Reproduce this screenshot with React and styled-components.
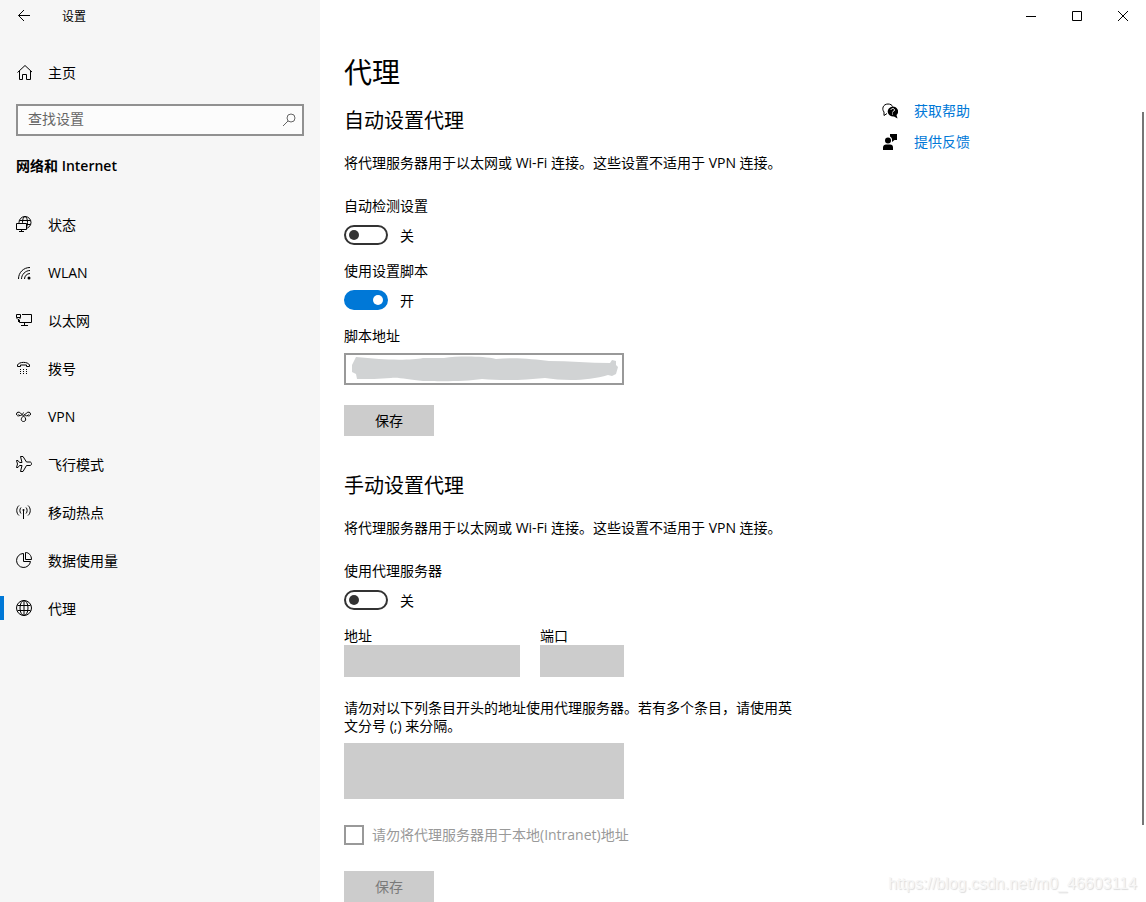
import React, { useState } from "react";
import styled, { createGlobalStyle } from "styled-components";

const GlobalStyle = createGlobalStyle`
  * {
    box-sizing: border-box;
  }

  body {
    margin: 0;
    background: #ffffff;
    color: #000000;
    font-family: "Open Sans", "Noto Sans CJK SC", sans-serif;
    font-size: 14px;
    line-height: 20px;
  }

  button,
  input,
  textarea {
    font: inherit;
    color: inherit;
    border-radius: 0;
  }

  h1, h2, p {
    margin: 0;
    font-weight: 400;
  }
`;

const Window = styled.div`
  position: relative;
  display: flex;
  min-height: 100vh;
`;

const Sidebar = styled.aside`
  flex: 0 0 320px;
  background: #f6f6f6;
`;

const AppBar = styled.div`
  display: flex;
  align-items: center;
  height: 32px;
`;

const BackButton = styled.button`
  display: flex;
  align-items: center;
  justify-content: center;
  width: 48px;
  height: 32px;
  padding: 0;
  border: 0;
  background: transparent;
`;

const AppName = styled.span`
  padding: 2px 0 0 14px;
  font-size: 12px;
`;

const Icon = styled.svg`
  display: block;
  flex: none;
  width: 16px;
  height: 16px;
  fill: none;
  stroke: currentColor;
  stroke-width: 1;
`;

const NavLink = styled.a`
  display: flex;
  align-items: center;
  gap: 16px;
  height: 48px;
  padding-left: 16px;
  color: #000000;
  text-decoration: none;

  &::before {
    content: "";
    display: ${(props) => (props.$active ? "block" : "none")};
    width: 4px;
    height: 24px;
    margin-left: -16px;
    margin-right: -4px;
    background: #0078d7;
  }
`;

const RowText = styled.span`
  padding-top: 2px;
`;

const HomeRow = styled.div`
  padding-top: 16px;
`;

const SearchBox = styled.label`
  display: flex;
  align-items: center;
  height: 32px;
  margin: 8px 16px 0;
  padding: 0 5px 0 10px;
  border: 2px solid #919191;
  background: #fcfcfc;
  color: #666666;
`;

const SearchInput = styled.input`
  flex: 1;
  min-width: 0;
  padding: 0 0 2px;
  border: 0;
  outline: 0;
  background: transparent;

  &::placeholder {
    color: #666666;
    opacity: 1;
  }
`;

const SectionTitle = styled.h2`
  margin: 20px 16px 24px;
  font-size: 14px;
  font-weight: 600;
`;

const Main = styled.main`
  flex: 1;
  min-width: 0;
`;

const WindowButtons = styled.div`
  display: flex;
  justify-content: flex-end;
  height: 32px;
`;

const WindowButton = styled.button`
  display: flex;
  align-items: center;
  justify-content: center;
  width: 46px;
  padding: 0;
  border: 0;
  background: transparent;
`;

const Columns = styled.div`
  display: flex;
  gap: 90px;
  padding: 22px 24px 0;
`;

const Settings = styled.div`
  flex: 0 1 448px;
`;

const PageTitle = styled.h1`
  font-size: 28px;
  line-height: 36px;
  padding-bottom: 17px;
`;

const Section = styled.section`
  & + & {
    margin-top: 36px;
  }
`;

const Heading = styled.h2`
  font-size: 20px;
  line-height: 28px;
`;

const Description = styled.p`
  padding: 18px 0 23px;
`;

const ToggleGroup = styled.div`
  padding-bottom: 16px;
`;

const ToggleLabel = styled.label`
  display: block;
`;

const ToggleRow = styled.div`
  display: flex;
  align-items: center;
  gap: 12px;
  height: 20px;
  margin-top: 9px;
`;

const Switch = styled.input`
  appearance: none;
  display: flex;
  align-items: center;
  justify-content: ${(props) => (props.checked ? "flex-end" : "flex-start")};
  width: 44px;
  height: 20px;
  margin: 0;
  padding: 0 3px;
  border: 2px solid ${(props) => (props.checked ? "#0078d7" : "#333333")};
  border-radius: 10px;
  background: ${(props) => (props.checked ? "#0078d7" : "#ffffff")};

  &::before {
    content: "";
    width: 10px;
    height: 10px;
    border-radius: 50%;
    background: ${(props) => (props.checked ? "#ffffff" : "#333333")};
  }
`;

const FieldLabel = styled.label`
  display: block;
  line-height: 18px;
`;

const ScriptField = styled.div`
  display: grid;
  width: 280px;
  margin: 8px 0 20px;

  & > * {
    grid-area: 1 / 1;
  }
`;

const ScriptInput = styled.input`
  width: 100%;
  height: 32px;
  padding: 0 10px;
  border: 2px solid #999999;
  background: #ffffff;
`;

const Scribble = styled.svg`
  width: 280px;
  height: 32px;
  fill: #d1d3d4;
  pointer-events: none;
`;

const SaveButton = styled.button`
  display: block;
  width: 90px;
  height: 31px;
  padding: 0;
  border: 0;
  background: #cccccc;

  &:disabled {
    color: #7a7a7a;
  }
`;

const FieldRow = styled.div`
  display: grid;
  grid-template-columns: 176px 84px;
  gap: 20px;
  padding-top: 1px;
`;

const DisabledInput = styled.input`
  display: block;
  width: 100%;
  height: 32px;
  border: 0;
  background: #cccccc;
`;

const ExceptionLabel = styled(FieldLabel)`
  padding: 22px 0 8px;
`;

const ExceptionBox = styled.textarea`
  display: block;
  width: 280px;
  height: 56px;
  border: 0;
  background: #cccccc;
  resize: none;
`;

const CheckRow = styled.label`
  display: flex;
  align-items: center;
  gap: 8px;
  padding: 26px 0;
  color: #999999;
`;

const Checkbox = styled.input`
  appearance: none;
  width: 20px;
  height: 20px;
  margin: 0;
  border: 2px solid #999999;
  background: #ffffff;
`;

const Help = styled.nav`
  display: flex;
  flex-direction: column;
  gap: 11px;
  padding-top: 47px;
`;

const HelpRow = styled.div`
  display: flex;
  align-items: center;
  gap: 16px;
`;

const HelpLink = styled.a`
  color: #0078d7;
  text-decoration: none;
`;

const ScrollThumb = styled.div`
  position: absolute;
  top: 112px;
  right: 2px;
  width: 2px;
  height: 713px;
  background: #767676;
`;

const Watermark = styled.span`
  position: absolute;
  right: 9px;
  bottom: 8px;
  color: #f6f6f6;
  font-family: "Liberation Sans", sans-serif;
  font-size: 16px;
  text-shadow: 1px 1px 1px #dcdcdc;
`;

const navItems = [
  {
    label: "状态",
    icon: (
      <>
        <circle cx="9" cy="6.500" r="6" />
        <ellipse cx="9" cy="6.500" rx="2.500" ry="6" />
        <path d="M3.500 4.500h11M3.500 8.500h11" />
        <path d="M.5 7.500h10v6H.5z" fill="#f6f6f6" />
        <path d="M5.500 13.500v2M3 15.500h5" />
      </>
    ),
  },
  {
    label: "WLAN",
    icon: (
      <>
        <path d="M2.500 15C2.500 8.500 7.500 3.500 14 3.500M5.500 15C5.500 10.500 9.500 6.500 14 6.500M8.500 15C8.500 12 11 9.500 14 9.500" />
        <circle cx="13" cy="14" r="1.500" fill="currentColor" stroke="none" />
      </>
    ),
  },
  {
    label: "以太网",
    icon: (
      <>
        <path d="M6 2.500h9.500v8h-12V8M.5 2.500h4v3h-4zM1 5.500v1l1 1h1l1-1v-1M2.500 8v2M8.500 10.500v3M5 13.500h7" />
      </>
    ),
  },
  {
    label: "拨号",
    icon: (
      <>
        <path d="M1.500 6.500V5C3 1.500 12 1.500 13.500 5v1.500h-3V5h-6v1.500z" />
        <path d="M4 9.500h1M7 9.500h1M10 9.500h1M4 11.500h1M7 11.500h1M10 11.500h1M4 13.500h1M7 13.500h1M10 13.500h1" />
      </>
    ),
  },
  {
    label: "VPN",
    icon: (
      <>
        <path d="M4 7.500C2 8.500.5 7.500.5 6 .5 4 3 3.500 4.500 5l4.500 4.500c1.500 2 .5 4-1.500 4s-3-2-1.500-4L10.500 5C12 3.500 14.500 4 14.500 6c0 1.500-1.500 2.500-3.500 1.500" />
        <path d="M2.500 6.500c2 2.500 4 0 5-2M12.500 6.500c-2 2.500-3.500 1-4.500-.5" />
      </>
    ),
  },
  {
    label: "飞行模式",
    icon: (
      <path d="M4.500.5H7l3.500 5.500h3.500c2 0 2 3.500 0 3.500h-3.500L7 15.500H4.500l1.500-6H3.500L2 11.500H.5L1.500 8 .5 4.500H2L3.500 6.500H6z" />
    ),
  },
  {
    label: "移动热点",
    icon: (
      <>
        <path d="M3 1.500C0 4 0 9 3 11.500M12 1.500c3 2.500 3 7.500 0 10M5 3.500c-1.500 1.500-1.500 4.500 0 6M10 3.500c1.500 1.500 1.500 4.500 0 6M7.500 6v9" />
        <circle cx="7.500" cy="6" r="1" fill="currentColor" stroke="none" />
      </>
    ),
  },
  {
    label: "数据使用量",
    icon: (
      <>
        <path d="M7 1.500a7 7 0 1 0 7.500 8H7.500v-8z" />
        <path d="M9.500.5v7h6C15.500 3.500 13 .5 9.500.5z" />
      </>
    ),
  },
  {
    label: "代理",
    active: true,
    icon: (
      <>
        <circle cx="8" cy="8" r="7.500" />
        <ellipse cx="8" cy="8" rx="4" ry="7.500" />
        <path d="M8 .5v15M1.500 5.500h13M1.500 10.500h13" />
      </>
    ),
  },
];

const Toggle = ({ id, label, defaultOn }) => {
  const [on, setOn] = useState(Boolean(defaultOn));
  return (
    <ToggleGroup>
      <ToggleLabel htmlFor={id}>{label}</ToggleLabel>
      <ToggleRow>
        <Switch
          id={id}
          type="checkbox"
          role="switch"
          checked={on}
          onChange={() => setOn(!on)}
        />
        <RowText>{on ? "开" : "关"}</RowText>
      </ToggleRow>
    </ToggleGroup>
  );
};

const SettingsSidebar = () => (
  <Sidebar>
    <AppBar>
      <BackButton aria-label="返回">
        <Icon viewBox="0 0 16 16">
          <path d="M14 7.500H2.500M8 2L2.500 7.500 8 13" />
        </Icon>
      </BackButton>
      <AppName>设置</AppName>
    </AppBar>
    <HomeRow>
      <NavLink href="#home">
        <Icon viewBox="0 0 16 16">
          <path d="M3.500 7v8.500h3v-5h4v5h4V7M1.500 8.500l7.500-7 7.500 7" />
        </Icon>
        <RowText>主页</RowText>
      </NavLink>
    </HomeRow>
    <SearchBox>
      <SearchInput aria-label="查找设置" placeholder="查找设置" />
      <Icon viewBox="0 0 16 16">
        <circle cx="10" cy="6" r="4" />
        <path d="M7 9l-5 5" />
      </Icon>
    </SearchBox>
    <SectionTitle>网络和 Internet</SectionTitle>
    <nav>
      {navItems.map((item) => (
        <NavLink key={item.label} href="#" $active={item.active}>
          <Icon viewBox="0 0 16 16">{item.icon}</Icon>
          <RowText>{item.label}</RowText>
        </NavLink>
      ))}
    </nav>
  </Sidebar>
);

const App = () => {
  return (
    <Window>
      <GlobalStyle />
      <SettingsSidebar />
      <Main>
        <WindowButtons>
          <WindowButton aria-label="最小化">
            <Icon viewBox="0 0 16 16">
              <path d="M3 8.500h10" />
            </Icon>
          </WindowButton>
          <WindowButton aria-label="最大化">
            <Icon viewBox="0 0 16 16">
              <path d="M3.500 3.500h9v9h-9z" />
            </Icon>
          </WindowButton>
          <WindowButton aria-label="关闭">
            <Icon viewBox="0 0 16 16">
              <path d="M3 3l10 10M13 3L3 13" />
            </Icon>
          </WindowButton>
        </WindowButtons>
        <Columns>
          <Settings>
            <PageTitle>代理</PageTitle>
            <Section>
              <Heading>自动设置代理</Heading>
              <Description>
                将代理服务器用于以太网或 Wi-Fi 连接。这些设置不适用于 VPN 连接。
              </Description>
              <Toggle id="auto-detect" label="自动检测设置" />
              <Toggle id="use-script" label="使用设置脚本" defaultOn />
              <FieldRow>
                <FieldLabel htmlFor="script-url">脚本地址</FieldLabel>
              </FieldRow>
              <ScriptField>
                <ScriptInput id="script-url" type="text" />
                <Scribble viewBox="0 0 280 32">
                  <path d="M12 4L35 6C50 7 70 7 79 5L100 5C115 3 138 3 152 6C170 4 190 6 205 8C225 8 245 10 266 10L268 7L272 8L272 12L274 14L272 21L268 23L264 22C245 28 220 28 201 25C180 27 160 28 138 26C120 29 90 28 79 28C65 27 55 24 47 25L30 26L13 26L12 21L8 19L8 12Z" />
                </Scribble>
              </ScriptField>
              <SaveButton>保存</SaveButton>
            </Section>
            <Section>
              <Heading>手动设置代理</Heading>
              <Description>
                将代理服务器用于以太网或 Wi-Fi 连接。这些设置不适用于 VPN 连接。
              </Description>
              <Toggle id="use-proxy" label="使用代理服务器" />
              <FieldRow>
                <div>
                  <FieldLabel htmlFor="address">地址</FieldLabel>
                  <DisabledInput id="address" type="text" disabled />
                </div>
                <div>
                  <FieldLabel htmlFor="port">端口</FieldLabel>
                  <DisabledInput id="port" type="text" disabled />
                </div>
              </FieldRow>
              <ExceptionLabel htmlFor="exceptions">
                请勿对以下列条目开头的地址使用代理服务器。若有多个条目，请使用英文分号 (;) 来分隔。
              </ExceptionLabel>
              <ExceptionBox id="exceptions" disabled />
              <CheckRow>
                <Checkbox type="checkbox" disabled />
                请勿将代理服务器用于本地(Intranet)地址
              </CheckRow>
              <SaveButton disabled>保存</SaveButton>
            </Section>
          </Settings>
          <Help>
            <HelpRow>
              <Icon viewBox="0 0 16 16">
                <path d="M5 10.500L2 12.500V9C-.5 6 1 1 6 1c2.500 0 4 1 4.500 2.500" />
                <path
                  d="M10.500 3.500a5.500 5 0 0 1 4 8.500l1 3.500-3.500-2A5.500 5 0 1 1 10.500 3.500z"
                  fill="currentColor"
                  stroke="none"
                />
                <path d="M9 7c0-2 3.500-2 3.500 0 0 1.500-2 1-2 2.500M10.500 10.500v1" stroke="#ffffff" />
              </Icon>
              <HelpLink href="#help">获取帮助</HelpLink>
            </HelpRow>
            <HelpRow>
              <Icon viewBox="0 0 16 16">
                <g fill="currentColor" stroke="none">
                  <circle cx="6" cy="6.500" r="3" />
                  <path d="M1 16v-2.500C1 11.500 2.500 10.500 4 10.500h4c2 0 3 1 3 3V16zM8 0h7v6h-2.500L10 8V5.500C10 4 9 3 8 2.500z" />
                </g>
              </Icon>
              <HelpLink href="#feedback">提供反馈</HelpLink>
            </HelpRow>
          </Help>
        </Columns>
      </Main>
      <ScrollThumb />
      <Watermark>https://blog.csdn.net/m0_46603114</Watermark>
    </Window>
  );
};

export default App;
